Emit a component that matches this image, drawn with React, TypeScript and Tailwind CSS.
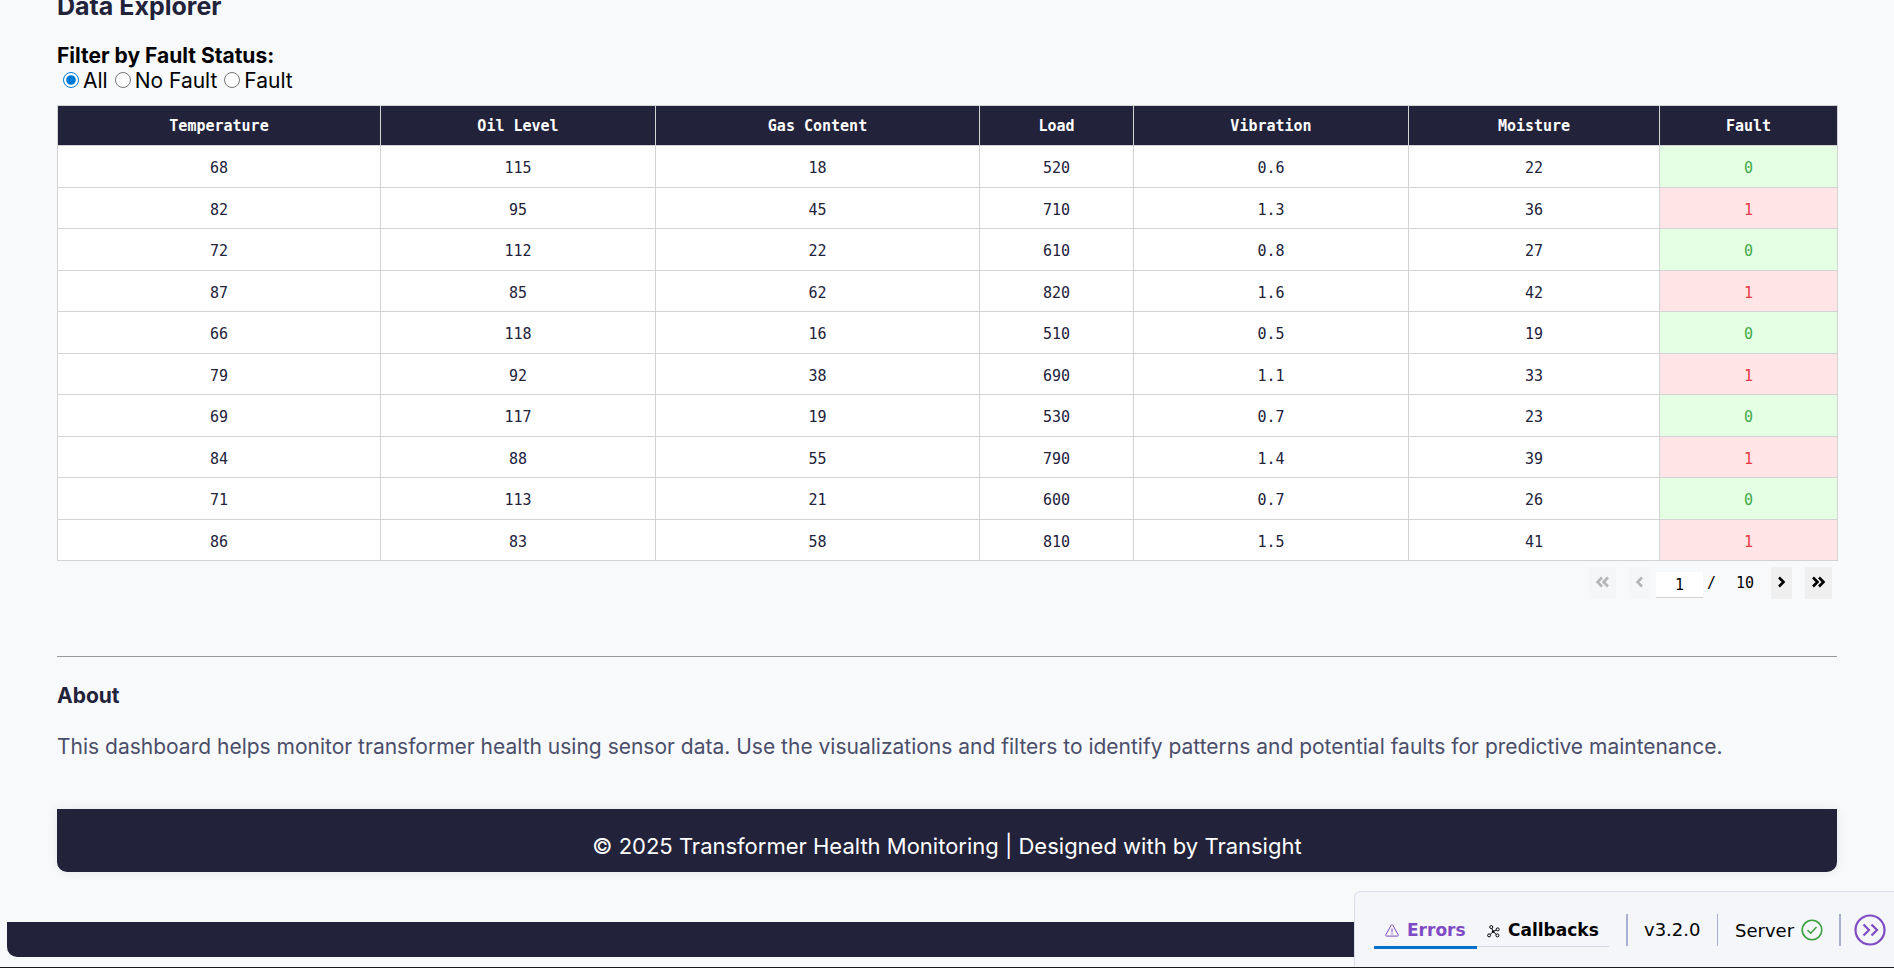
import React, { useState } from "react";

const columns = ["Temperature", "Oil Level", "Gas Content", "Load", "Vibration", "Moisture", "Fault"];
const rows = [
  ["68", "115", "18", "520", "0.6", "22", "0"],
  ["82", "95", "45", "710", "1.3", "36", "1"],
  ["72", "112", "22", "610", "0.8", "27", "0"],
  ["87", "85", "62", "820", "1.6", "42", "1"],
  ["66", "118", "16", "510", "0.5", "19", "0"],
  ["79", "92", "38", "690", "1.1", "33", "1"],
  ["69", "117", "19", "530", "0.7", "23", "0"],
  ["84", "88", "55", "790", "1.4", "39", "1"],
  ["71", "113", "21", "600", "0.7", "26", "0"],
  ["86", "83", "58", "810", "1.5", "41", "1"],
];

function Chevrons({ double, left }: { double?: boolean; left?: boolean }) {
  return (
    <svg width={double ? 15 : 9} height="12" viewBox={double ? "0 0 15 12" : "0 0 9 12"} fill="none" stroke="currentColor" strokeWidth="2.6" aria-hidden="true">
      {left ? (
        <>
          <path d="M7 1.5 2.5 6 7 10.5" />
          {double && <path d="M13 1.5 8.5 6 13 10.5" />}
        </>
      ) : (
        <>
          <path d="M2 1.5 6.5 6 2 10.5" />
          {double && <path d="M8 1.5 12.5 6 8 10.5" />}
        </>
      )}
    </svg>
  );
}

function Filter() {
  const [value, setValue] = useState("All");
  return (
    <fieldset className="flex flex-col">
      <legend className="h-[26px] text-[21px] leading-[26px] font-bold text-black">Filter by Fault Status:</legend>
      <div className="flex h-6 items-center gap-[7px] pl-[6px]">
        {["All", "No Fault", "Fault"].map((o) => (
          <label key={o} className="flex items-start gap-1 text-[21px] leading-6 text-black">
            <input type="radio" name="fault" checked={value === o} onChange={() => setValue(o)} className="mt-[3px] size-4 accent-[#0078d7]" />
            {o}
          </label>
        ))}
      </div>
    </fieldset>
  );
}

function DataTable() {
  return (
    <table className="w-full table-fixed border-collapse bg-white text-center font-['DejaVu_Sans_Mono',monospace] text-[15px] leading-5 text-[#22223b]">
      <colgroup>
        <col className="w-[323px]" />
        <col className="w-[275px]" />
        <col className="w-[324px]" />
        <col className="w-[154px]" />
        <col className="w-[275px]" />
        <col className="w-[251px]" />
        <col className="w-[178px]" />
      </colgroup>
      <thead>
        <tr className="h-10 bg-[#22223b] text-white">
          {columns.map((c) => (
            <th key={c} scope="col" className="border border-[#d3d3d3] font-bold">{c}</th>
          ))}
        </tr>
      </thead>
      <tbody>
        {rows.map((r, i) => (
          <tr key={i} className="h-[42px] even:h-[41px]">
            {r.map((v, j) => (
              <td
                key={j}
                className={
                  j < 6
                    ? "border border-[#d3d3d3] pt-[3px]"
                    : v === "0"
                      ? "border border-[#d3d3d3] bg-[#e4ffe3] pt-[3px] text-[#43aa4b]"
                      : "border border-[#d3d3d3] bg-[#ffe5e5] pt-[3px] text-[#e63946]"
                }
              >
                {v}
              </td>
            ))}
          </tr>
        ))}
      </tbody>
    </table>
  );
}

function Pagination() {
  return (
    <nav aria-label="Pages" className="flex h-8 items-start justify-end pr-[5px] font-['DejaVu_Sans_Mono',monospace] text-[15px] text-black">
      <button disabled aria-label="First page" className="flex h-8 w-[27px] items-center justify-center bg-[#f5f6f8] pb-[3px] text-[#b5b5b6]"><Chevrons double left /></button>
      <button disabled aria-label="Previous page" className="ml-[13px] flex h-8 w-[21px] items-center justify-center bg-[#f5f6f8] pb-[3px] text-[#b5b5b6]"><Chevrons left /></button>
      <input aria-label="Current page" defaultValue="1" className="mt-[5px] ml-[6px] h-[26px] w-[47px] border-b border-[#d3d3d3] bg-white text-center" />
      <span className="ml-1 leading-8">/</span>
      <span className="ml-5 leading-8">10</span>
      <button aria-label="Next page" className="ml-[17px] flex h-8 w-[21px] items-center justify-center bg-[#efefef] pb-[3px]"><Chevrons /></button>
      <button aria-label="Last page" className="ml-[13px] flex h-8 w-[27px] items-center justify-center bg-[#efefef] pb-[3px]"><Chevrons double /></button>
    </nav>
  );
}

function DevTools() {
  return (
    <aside className="fixed right-0 bottom-px flex h-[76px] w-[540px] items-start rounded-tl-md border-t border-l border-[#d9dcea] bg-[#f4f6fa] pt-[22px] pl-[19px] font-['DejaVu_Sans',sans-serif] text-[18px] text-black">
      <div className="flex h-[35px] items-start text-[17px]">
        <button className="flex h-[35px] w-[103px] items-center gap-2 border-b-[3px] border-[#0072ce] pt-[2px] pl-[11px] font-bold text-[#7f4bc4]">
          <svg width="14" height="14" viewBox="0 0 14 14" fill="none" stroke="currentColor" aria-hidden="true">
            <path d="M6.1 1.3.8 10.8c-.3.6 0 1.3.8 1.3h10.8c.8 0 1.1-.7.8-1.3L7.9 1.3c-.4-.7-1.4-.7-1.8 0z" />
            <path d="M7 4.5v4M7 9.4v1.2" />
          </svg>
          Errors
        </button>
        <button className="flex h-[33px] w-[132px] items-center gap-2 border-b border-[#d4d7e6] pt-[2px] pl-[10px] font-bold">
          <svg width="13" height="13" viewBox="0 0 13 13" fill="none" stroke="currentColor" aria-hidden="true">
            <circle cx="4.3" cy="2.1" r="1.5" />
            <circle cx="10.7" cy="4.4" r="1.5" />
            <circle cx="2.1" cy="10.4" r="1.5" />
            <circle cx="10.4" cy="10.4" r="1.5" />
            <circle cx="6.2" cy="6.6" r="0.8" fill="currentColor" />
            <path d="M4.9 3.5 6.2 6.6M9.3 4.9 6.2 6.6M3.2 9.3l3-2.7M9.3 9.4 6.2 6.6" />
          </svg>
          Callbacks
        </button>
      </div>
      <div className="ml-[17px] h-8 w-0.5 bg-[#aab1d0]" />
      <span className="ml-4 w-[73px] leading-8">v3.2.0</span>
      <div className="h-8 w-px bg-[#aab1d0]" />
      <span className="ml-[17px] flex h-8 w-[104px] items-center gap-[7px]">
        Server
        <svg width="22" height="22" viewBox="0 0 22 22" fill="none" stroke="#3aa03f" strokeWidth="1.6" aria-hidden="true">
          <circle cx="11" cy="11" r="9.8" /><path d="m6.5 11 3.2 3.2L15.5 8" />
        </svg>
      </span>
      <div className="h-8 w-0.5 bg-[#aab1d0]" />
      <button aria-label="Collapse" className="ml-[13px]">
        <svg width="32" height="32" viewBox="0 0 32 32" fill="none" stroke="#7f4bc4" strokeWidth="2.2" aria-hidden="true">
          <circle cx="16" cy="16" r="14.5" /><path d="m9.5 10.5 5.5 5.5-5.5 5.5M17.5 10.5l5.5 5.5-5.5 5.5" />
        </svg>
      </button>
    </aside>
  );
}

export default function App() {
  return (
    <div className="min-h-screen overflow-x-hidden border-b border-[#1a1a1a] bg-[#f8f9fb] font-[Inter,'Open_Sans',sans-serif]">
      <main className="px-[57px]">
        <h2 className="-mt-[9px] mb-[22px] text-[25px] leading-[30px] font-bold text-[#22223b]">Data Explorer</h2>
        <Filter />
        <div className="mt-3"><DataTable /></div>
        <div className="mt-[6px]"><Pagination /></div>
        <hr className="mt-[57px] border-t border-[#999]" />
        <h4 className="mt-[27px] text-[21px] leading-6 font-bold text-[#22223b]">About</h4>
        <p className="mt-[24px] text-[21px] leading-[30px] text-[#4a4e69]">
          This dashboard helps monitor transformer health using sensor data. Use the visualizations and filters to identify patterns and potential faults for predictive maintenance.
        </p>
        <footer className="mt-[47px] rounded-b-[10px] bg-[#22223b] pt-6 pb-[13px] text-center text-[22px] leading-[26px] text-white shadow-[0_0_12px_rgba(0,0,0,0.08)]">
          © 2025 Transformer Health Monitoring | Designed with by Transight
        </footer>
      </main>
      <div className="mx-[7px] mt-[50px] mb-2 h-[35px] rounded-b-[10px] bg-[#22223b]" />
      <DevTools />
    </div>
  );
}
